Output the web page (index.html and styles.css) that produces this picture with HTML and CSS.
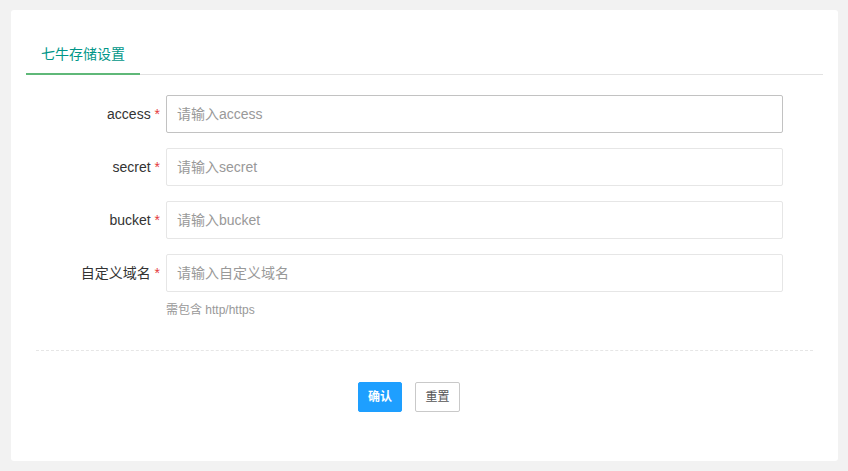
FILE: index.html
```html
<!DOCTYPE html>
<html lang="zh-CN">
<head>
  <meta charset="UTF-8" />
  <meta name="viewport" content="width=device-width, initial-scale=1.0" />
  <title>七牛存储设置</title>
  <link rel="stylesheet" href="styles.css">
</head>
<body>
  <div class="card">
    <ul class="tab-title">
      <li class="this">七牛存储设置</li>
    </ul>
    <form class="settings-form" onsubmit="return false">
      <div class="form-item">
        <label class="form-label" for="access">access <span class="req">*</span></label>
        <input class="form-input hover" type="text" id="access" placeholder="请输入access">
      </div>
      <div class="form-item">
        <label class="form-label" for="secret">secret <span class="req">*</span></label>
        <input class="form-input" type="text" id="secret" placeholder="请输入secret">
      </div>
      <div class="form-item">
        <label class="form-label" for="bucket">bucket <span class="req">*</span></label>
        <input class="form-input" type="text" id="bucket" placeholder="请输入bucket">
      </div>
      <div class="form-item">
        <label class="form-label" for="domain">自定义域名 <span class="req">*</span></label>
        <div class="input-block">
          <input class="form-input" type="text" id="domain" placeholder="请输入自定义域名">
          <div class="form-aux">需包含 http/https</div>
        </div>
      </div>
      <div class="form-line"></div>
      <div class="btn-row">
        <button class="btn btn-primary" type="submit">确认</button>
        <button class="btn btn-plain" type="reset">重置</button>
      </div>
    </form>
  </div>
</body>
</html>
```

FILE: styles.css
```css
body { margin: 0; padding: 10px 10px 10px 11px; background-color: #f2f2f2; font-family: "Liberation Sans", "Noto Sans CJK SC", sans-serif; font-size: 14px; color: #333; }
.card { background-color: #fff; border-radius: 3px; padding: 24px 15px 0 15px; height: 427px; }
.tab-title { list-style: none; margin: 0; padding: 0; height: 40px; border-bottom: 1px solid #e2e2e2; display: flex; }
.tab-title li { padding: 0 15px; line-height: 40px; color: #009688; font-size: 14px; position: relative; }
.tab-title li.this::after { content: ""; position: absolute; left: 0; right: 0; bottom: -1px; height: 2px; background-color: #5fb878; }
.settings-form { padding-top: 20px; }
.form-item { display: flex; align-items: flex-start; margin-bottom: 15px; }
.form-label { width: 134px; padding-right: 6px; text-align: right; line-height: 38px; color: #333; }
.req { color: #e4393c; }
.input-block { display: flex; flex-direction: column; }
.form-input { width: 617px; height: 38px; box-sizing: border-box; border: 1px solid #e6e6e6; border-radius: 2px; padding: 0 10px; font-family: inherit; font-size: 14px; color: #333; outline: none; }
.form-input.hover { border-color: #c2c2c2; }
.form-input::placeholder { color: #999; }
.form-aux { font-size: 12px; color: #999; margin-top: 10px; line-height: 16px; }
.form-line { margin: 32px 10px 0 10px; border-top: 1px dashed #e6e6e6; }
.btn-row { display: flex; gap: 13px; padding-left: 332px; margin-top: 31px; }
.btn { height: 30px; line-height: 28px; font-size: 12px; font-family: inherit; border-radius: 2px; cursor: pointer; box-sizing: border-box; }
.btn-primary { padding: 0 9px; background-color: #1e9fff; color: #fff; border: 1px solid #1e9fff; font-weight: bold; }
.btn-plain { padding: 0 9.5px; background-color: #fff; color: #555; border: 1px solid #c9c9c9; }
```
